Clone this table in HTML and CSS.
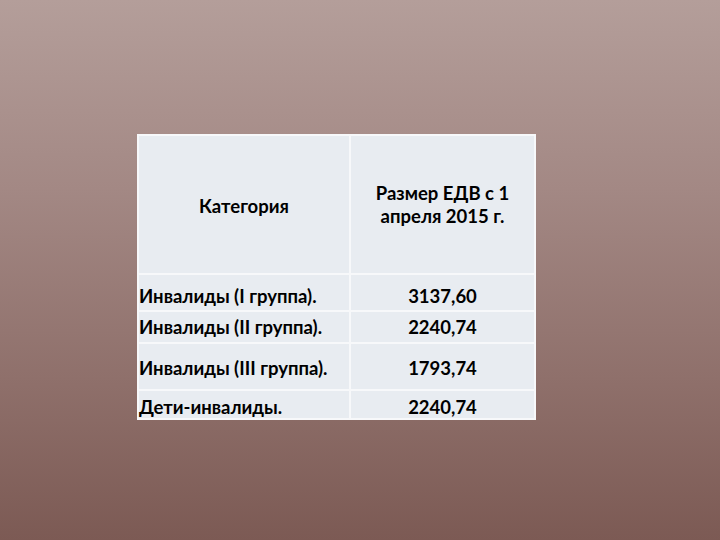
FILE: index.html
```html
<!DOCTYPE html>
<html lang="ru">
<head>
<meta charset="utf-8">
<link rel="stylesheet" href="styles.css">
</head>
<body>
<div class="slide">
  <table class="edv">
    <tr class="head">
      <td class="c1">Категория</td>
      <td class="c2">Размер ЕДВ с 1<br>апреля 2015 г.</td>
    </tr>
    <tr class="r1">
      <td class="c1">Инвалиды (I группа).</td>
      <td class="c2">3137,60</td>
    </tr>
    <tr class="r2">
      <td class="c1">Инвалиды (II группа).</td>
      <td class="c2">2240,74</td>
    </tr>
    <tr class="r3">
      <td class="c1">Инвалиды (III группа).</td>
      <td class="c2">1793,74</td>
    </tr>
    <tr class="r4">
      <td class="c1">Дети-инвалиды.</td>
      <td class="c2">2240,74</td>
    </tr>
  </table>
</div>
</body>
</html>
```
FILE: styles.css
```css
html, body {
  margin: 0;
  padding: 0;
}
.slide {
  width: 720px;
  height: 540px;
  box-sizing: border-box;
  padding: 134px 0 0 137px;
  background: linear-gradient(180deg, #b49e9a 0%, #a38884 35%, #8f706b 70%, #7c5a54 100%);
  overflow: hidden;
}
.edv {
  border-collapse: collapse;
  width: 399px;
  font-family: Lato, "Open Sans", sans-serif;
  font-weight: 700;
  font-size: 18.5px;
  color: #000;
  background: #e8ecf1;
  border: 1px solid #f4f6f8;
}
.edv td {
  border: 2px solid #f7f8fa;
  padding: 0;
  line-height: 20px;
}
.edv td.c1 {
  width: 210px;
}
.edv td.c2 {
  text-align: center;
}
.head td {
  height: 134px;
  text-align: center;
  vertical-align: middle;
  line-height: 23px;
}
.head td.c1 {
  padding-top: 3px;
}
.head td.c2 {
  padding-top: 0;
  height: 137px;
}
.r1 td { height: 29px; padding-top: 6px; }
.r2 td { height: 30px; }
.r3 td { height: 43px; padding-top: 2px; }
.r4 td { height: 22px; padding-top: 5px; }
```
